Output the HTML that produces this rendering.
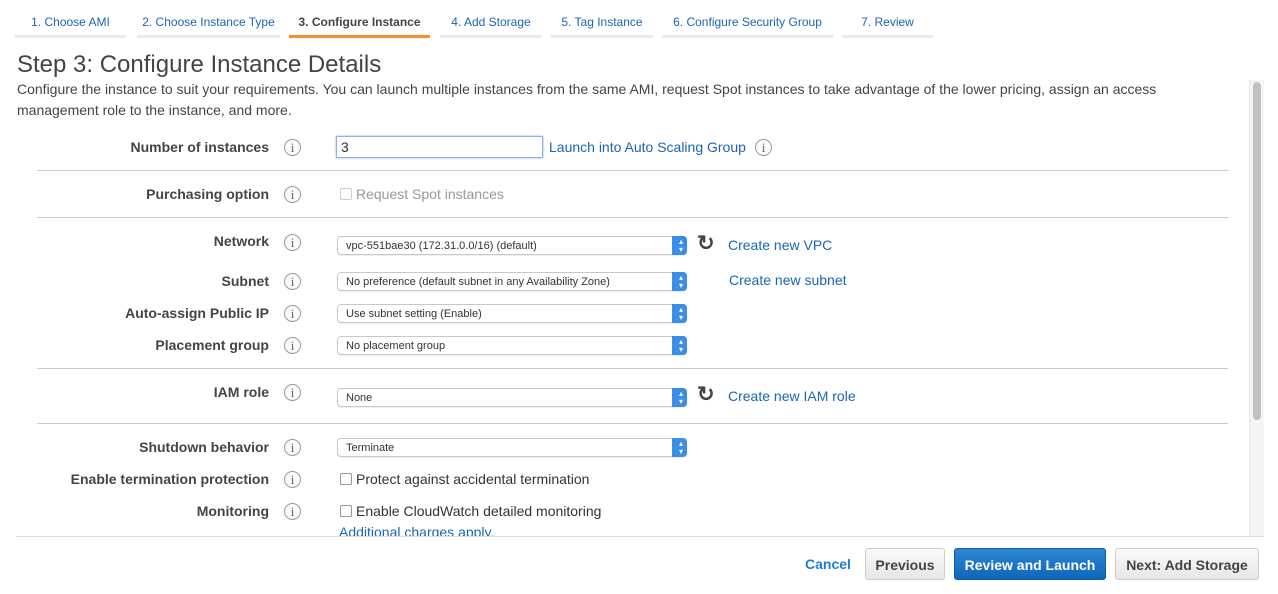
<!DOCTYPE html><html><head><style>
body{margin:0;width:1278px;height:594px;background:#fff;font-family:"Liberation Sans",Arial,sans-serif;position:relative;overflow:hidden;color:#333}
.a{position:absolute}
.tab{position:absolute;top:10px;height:25px;border-bottom:3px solid #eaeaea;font-size:12px;color:#1a66b3;line-height:25px;text-align:center}
.tab.on{border-bottom-color:#f0922e;color:#444;font-weight:bold}
.lbl{position:absolute;right:1009px;font-size:14px;font-weight:bold;color:#444;white-space:nowrap}
.i{position:absolute;left:284px;width:15px;height:15px;border:1px solid #999;border-radius:50%;font:13px "Liberation Serif",serif;color:#666;text-align:center;line-height:16px;background:#fafafa}
.sel{position:absolute;left:337px;border:1px solid #c8c8c8;border-radius:4px;font-size:11px;line-height:18px;padding-left:8px;box-sizing:border-box;width:350px;height:19px;background:#fff;box-shadow:0 1px 1px rgba(0,0,0,.08)}
.sel:after{content:"";position:absolute;right:-1px;top:-1px;width:15px;height:19px;background:#3b8ee8;border-radius:0 4px 4px 0}
.sel b{position:absolute;right:3px;color:#fff;z-index:2;font-size:8px;line-height:8px;font-weight:normal;top:1px}
.hr{position:absolute;left:37px;width:1191px;height:1px;background:#ccc}
.lnk{position:absolute;color:#1a66b3;font-size:14px;white-space:nowrap}
.txt{position:absolute;font-size:14px;white-space:nowrap}
.cb{display:inline-block;width:10px;height:10px;border:1px solid #999;border-radius:2px;vertical-align:-1px;margin-right:4px;background:#fff}
.ref{position:absolute;left:697px;font-size:21px;font-weight:bold;color:#444;line-height:20px}
.btn{position:absolute;top:548px;height:32px;border-radius:3px;font-size:14px;font-weight:bold;line-height:32px;text-align:center;box-sizing:border-box}
</style></head><body>
<div class="tab" style="left:15px;width:111px">1. Choose AMI</div>
<div class="tab" style="left:137px;width:143px">2. Choose Instance Type</div>
<div class="tab on" style="left:289px;width:141px">3. Configure Instance</div>
<div class="tab" style="left:440px;width:102px">4. Add Storage</div>
<div class="tab" style="left:551px;width:102px">5. Tag Instance</div>
<div class="tab" style="left:662px;width:171px">6. Configure Security Group</div>
<div class="tab" style="left:842px;width:91px">7. Review</div>
<div class="a" style="left:17px;top:51px;font-size:24px;color:#444">Step 3: Configure Instance Details</div>
<div class="a" style="left:17px;top:79px;font-size:14px;line-height:21px;width:1200px;color:#444">Configure the instance to suit your requirements. You can launch multiple instances from the same AMI, request Spot instances to take advantage of the lower pricing, assign an access management role to the instance, and more.</div>
<div class="a" style="left:1249px;top:80px;width:14px;height:456px;background:#f4f4f4;border-left:1px solid #e6e6e6"></div>
<div class="a" style="left:1253px;top:82px;width:8px;height:338px;background:#c1c1c1;border-radius:4px"></div>

<div class="lbl" style="top:139px">Number of instances</div><div class="i" style="top:139px">i</div>
<div class="a" style="left:336px;top:136px;width:207px;height:22px;border:1px solid #8ab4e6;box-shadow:0 0 2px #8ab4e6;font-size:14px;line-height:21px;padding-left:4px;box-sizing:border-box">3</div>
<div class="lnk" style="left:549px;top:139px">Launch into Auto Scaling Group</div><div class="i" style="top:139px;left:755px">i</div>
<div class="hr" style="top:170px"></div>
<div class="lbl" style="top:186px">Purchasing option</div><div class="i" style="top:186px">i</div>
<div class="txt" style="left:340px;top:186px;color:#999"><span class="cb" style="border-color:#ccc"></span>Request Spot instances</div>
<div class="hr" style="top:217px"></div>
<div class="lbl" style="top:233px">Network</div><div class="i" style="top:234px">i</div>
<div class="sel" style="top:236px">vpc-551bae30 (172.31.0.0/16) (default)<b>▴<br>▾</b></div>
<div class="ref" style="top:234px">↻</div><div class="lnk" style="left:728px;top:237px">Create new VPC</div>
<div class="lbl" style="top:273px">Subnet</div><div class="i" style="top:273px">i</div>
<div class="sel" style="top:272px">No preference (default subnet in any Availability Zone)<b>▴<br>▾</b></div>
<div class="lnk" style="left:729px;top:272px">Create new subnet</div>
<div class="lbl" style="top:305px">Auto-assign Public IP</div><div class="i" style="top:305px">i</div>
<div class="sel" style="top:304px">Use subnet setting (Enable)<b>▴<br>▾</b></div>
<div class="lbl" style="top:337px">Placement group</div><div class="i" style="top:337px">i</div>
<div class="sel" style="top:336px">No placement group<b>▴<br>▾</b></div>
<div class="hr" style="top:368px"></div>
<div class="lbl" style="top:384px">IAM role</div><div class="i" style="top:384px">i</div>
<div class="sel" style="top:388px">None<b>▴<br>▾</b></div>
<div class="ref" style="top:385px">↻</div><div class="lnk" style="left:728px;top:388px">Create new IAM role</div>
<div class="hr" style="top:423px"></div>
<div class="lbl" style="top:439px">Shutdown behavior</div><div class="i" style="top:439px">i</div>
<div class="sel" style="top:438px">Terminate<b>▴<br>▾</b></div>
<div class="lbl" style="top:471px">Enable termination protection</div><div class="i" style="top:471px">i</div>
<div class="txt" style="left:340px;top:471px"><span class="cb"></span>Protect against accidental termination</div>
<div class="lbl" style="top:503px">Monitoring</div><div class="i" style="top:503px">i</div>
<div class="txt" style="left:340px;top:503px"><span class="cb"></span>Enable CloudWatch detailed monitoring</div>
<div class="lnk" style="left:339px;top:524px">Additional charges apply.</div>
<div class="a" style="left:0;top:537px;width:1278px;height:57px;background:#fff"></div>
<div class="a" style="left:16px;top:536px;width:1248px;height:1px;background:#ddd"></div>
<div class="btn" style="left:800px;width:56px;color:#1a7fd6">Cancel</div>
<div class="btn" style="left:865px;width:80px;border:1px solid #ccc;background:linear-gradient(#fafafa,#e6e6e6);color:#444">Previous</div>
<div class="btn" style="left:954px;width:152px;border:1px solid #0f5fa8;background:linear-gradient(#2e86d4,#0d66b8);color:#fff">Review and Launch</div>
<div class="btn" style="left:1115px;width:144px;border:1px solid #ccc;background:linear-gradient(#fafafa,#e6e6e6);color:#444">Next: Add Storage</div>
</body></html>
